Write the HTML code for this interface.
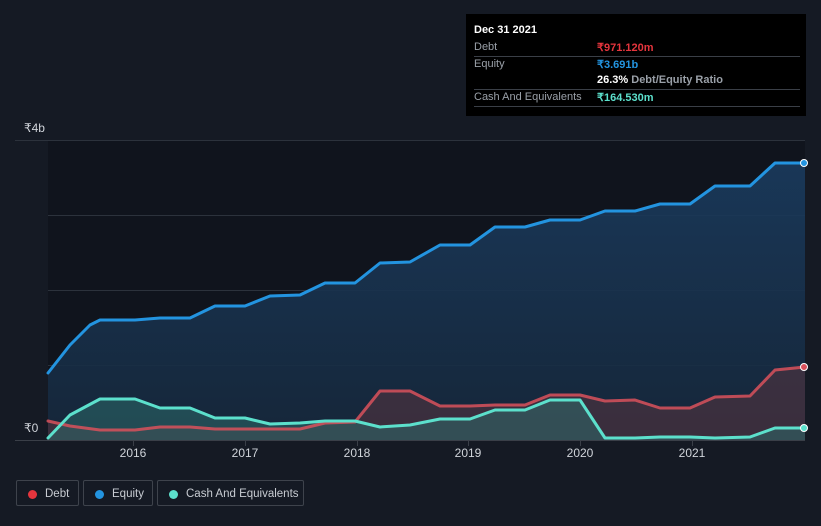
<!DOCTYPE html>
<html><head><meta charset="utf-8"><style>
html,body{margin:0;padding:0;background:#151a24;width:821px;height:526px;overflow:hidden;font-family:"Liberation Sans",sans-serif}
.tt{position:absolute;left:466px;top:14px;width:340px;height:102px;background:#000;color:#fff;font-size:11px}
.tt .r{position:absolute;left:8px;right:6px;height:16px;border-bottom:1px solid #3a3f47;color:#9aa0a8}
.tt .v{position:absolute;left:123px;font-weight:bold;white-space:nowrap}
.lg{position:absolute;top:480px;height:26px;border:1px solid #3e434c;border-radius:2px;color:#c8ccd2;font-size:11.5px;line-height:26px;box-sizing:border-box;white-space:nowrap}
.lg i{position:absolute;left:11px;top:9px;width:9px;height:9px;border-radius:50%}
</style></head><body>
<svg width="821" height="526" style="position:absolute;left:0;top:0">
<defs>
<linearGradient id="ge" x1="0" y1="0" x2="0" y2="1"><stop offset="0" stop-color="#1a3b5e" stop-opacity=".9"/><stop offset="1" stop-color="#16283c" stop-opacity=".9"/></linearGradient>
</defs>
<rect x="48" y="140" width="757" height="300" fill="#10141d"/>
<g stroke="#2c323c" stroke-width="1">
<line x1="15" y1="140.5" x2="805" y2="140.5"/><line x1="48" y1="215.5" x2="805" y2="215.5"/><line x1="48" y1="290.5" x2="805" y2="290.5"/><line x1="48" y1="365.5" x2="805" y2="365.5"/>
</g>
<polygon fill="url(#ge)" points="48,440 48,373 70,345 90,325 100,320 135,320 160,318 190,318 215,306 245,306 270,296 300,295 325,283 355,283 380,263 410,262 440,245 470,245 495,227 525,227 550,220 580,220 605,211 635,211 660,204 690,204 715,186 750,186 775,163 805,163 805,440"/>
<polygon fill="#5a3440" fill-opacity=".55" points="48,440 48,421 70,426 100,430 135,430 160,427 190,427 215,429 300,429 325,423 355,422 380,391 410,391 440,406 470,406 495,405 525,405 550,395 580,395 605,401 635,400 660,408 690,408 715,397 750,396 775,370 805,367 805,440"/>
<polygon fill="#2e6a6a" fill-opacity=".55" points="48,440 48,438 70,415 100,399 135,399 160,408 190,408 215,418 245,418 270,424 300,423 325,421 355,421 380,427 410,425 440,419 470,419 495,410 525,410 550,400 580,400 605,438 635,438 660,437 690,437 715,438 750,437 775,428 805,428 805,440"/>
<g fill="none" stroke-width="3" stroke-linejoin="round" stroke-linecap="round">
<polyline stroke="#2394e0" points="48,373 70,345 90,325 100,320 135,320 160,318 190,318 215,306 245,306 270,296 300,295 325,283 355,283 380,263 410,262 440,245 470,245 495,227 525,227 550,220 580,220 605,211 635,211 660,204 690,204 715,186 750,186 775,163 805,163"/>
<polyline stroke="#d9515c" stroke-opacity=".85" points="48,421 70,426 100,430 135,430 160,427 190,427 215,429 300,429 325,423 355,422 380,391 410,391 440,406 470,406 495,405 525,405 550,395 580,395 605,401 635,400 660,408 690,408 715,397 750,396 775,370 805,367"/>
<polyline stroke="#5ce0cc" points="48,438 70,415 100,399 135,399 160,408 190,408 215,418 245,418 270,424 300,423 325,421 355,421 380,427 410,425 440,419 470,419 495,410 525,410 550,400 580,400 605,438 635,438 660,437 690,437 715,438 750,437 775,428 805,428"/>
</g>
<line x1="15" y1="440.5" x2="805" y2="440.5" stroke="#3a3f48"/>
<g stroke="#3a3f48"><line x1="133.5" y1="440" x2="133.5" y2="446"/><line x1="245.5" y1="440" x2="245.5" y2="446"/><line x1="357.5" y1="440" x2="357.5" y2="446"/><line x1="468.5" y1="440" x2="468.5" y2="446"/><line x1="580.5" y1="440" x2="580.5" y2="446"/><line x1="692.5" y1="440" x2="692.5" y2="446"/></g>
<circle cx="804" cy="163" r="3.5" fill="#2394e0" stroke="#fff" stroke-width="1"/>
<circle cx="804" cy="367" r="3.5" fill="#d9515c" stroke="#fff" stroke-width="1"/>
<circle cx="804" cy="428" r="3.5" fill="#5ce0cc" stroke="#fff" stroke-width="1"/>
<g fill="#d0d4da" font-size="12" font-family="Liberation Sans,sans-serif">
<text x="24" y="132">₹4b</text><text x="24" y="432">₹0</text>
<g text-anchor="middle"><text x="133" y="457">2016</text><text x="245" y="457">2017</text><text x="357" y="457">2018</text><text x="468" y="457">2019</text><text x="580" y="457">2020</text><text x="692" y="457">2021</text></g>
</g>
</svg>
<div class="tt">
<div style="position:absolute;left:8px;top:10px;font-weight:bold">Dec 31 2021</div>
<div class="r" style="top:26px"><span style="position:absolute;top:1px">Debt</span><span class="v" style="color:#e5353d;top:1px">₹971.120m</span></div>
<div class="r" style="top:43px;border:0"><span style="position:absolute;top:1px">Equity</span><span class="v" style="color:#2394e0;top:1px">₹3.691b</span></div>
<div class="r" style="top:59px"><span class="v" style="color:#fff;top:1px">26.3% <span style="color:#9aa0a8">Debt/Equity Ratio</span></span></div>
<div class="r" style="top:76px"><span style="position:absolute;top:1px">Cash And Equivalents</span><span class="v" style="color:#5ce0cc;top:1px">₹164.530m</span></div>
</div>
<div class="lg" style="left:16px;width:63px"><i style="background:#e5353d"></i><span style="position:absolute;left:28px">Debt</span></div>
<div class="lg" style="left:83px;width:70px"><i style="background:#2394e0"></i><span style="position:absolute;left:28px">Equity</span></div>
<div class="lg" style="left:157px;width:147px"><i style="background:#5ce0cc"></i><span style="position:absolute;left:28px">Cash And Equivalents</span></div>
</body></html>
